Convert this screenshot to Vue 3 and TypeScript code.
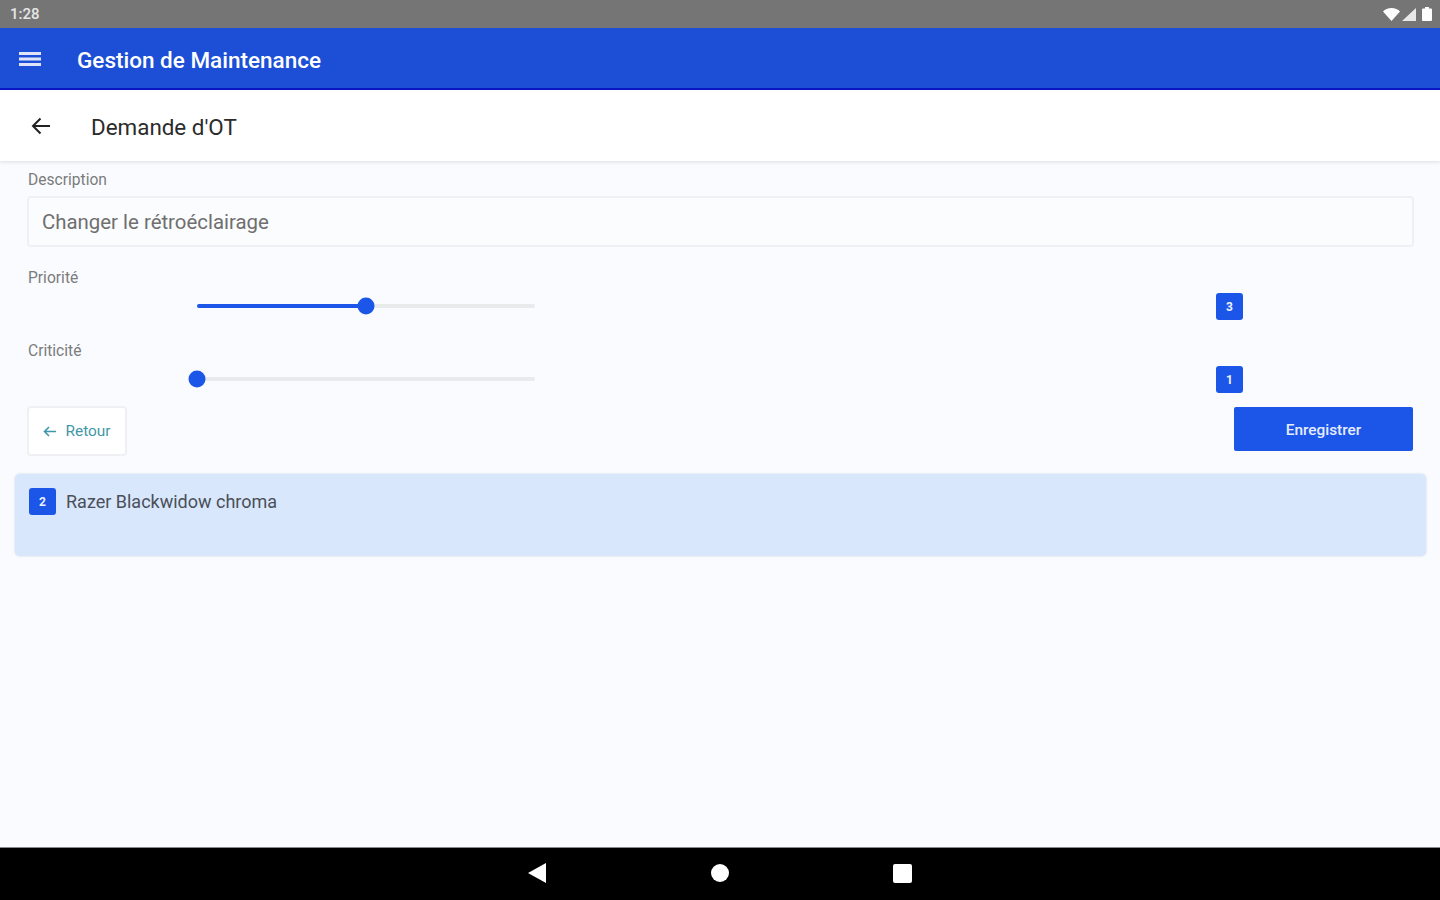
<script setup lang="ts">
interface SliderRow { label: string; value: number; percent: number }
const sliders: SliderRow[] = [
  { label: 'Priorité', value: 3, percent: 50 },
  { label: 'Criticité', value: 1, percent: 0 },
]
</script>

<template>
  <div class="page">
    <div class="status">
      <span class="time">1:28</span>
      <div class="status-icons">
        <svg width="17" height="13" viewBox="0 0 17 13"><path d="M0 3.500C2 1.300 5 0 8.500 0S15 1.300 17 3.500L8.500 13z" fill="#fff" /></svg>
        <svg width="14" height="13" viewBox="0 0 14 13"><path d="M14 0V13H0z" fill="#e8e8e8" /></svg>
        <svg class="battery" width="10" height="14" viewBox="0 0 10 14"><path d="M3 0h4v1.500h2a1 1 0 0 1 1 1V13a1 1 0 0 1-1 1H1a1 1 0 0 1-1-1V2.500a1 1 0 0 1 1-1h2z" fill="#fff" /></svg>
      </div>
    </div>

    <header class="appbar">
      <svg class="menu" width="22" height="16" viewBox="0 0 22 16"><path d="M0 1h22v3H0zM0 6.500h22v3H0zM0 12h22v3H0z" fill="#dfe4fa" /></svg>
      <h1>Gestion de Maintenance</h1>
    </header>

    <div class="subbar">
      <svg width="20" height="18" viewBox="0 0 20 18" fill="none" stroke="#222" stroke-width="2"><path d="M19 9H2M9.500 1.500L2 9l7.500 7.500" /></svg>
      <h2>Demande d'OT</h2>
    </div>

    <main class="content">
      <div class="form">
        <label class="label first">Description</label>
        <div class="input">Changer le rétroéclairage</div>

        <template v-for="s in sliders" :key="s.label">
          <label class="label">{{ s.label }}</label>
          <div class="slider-row">
            <div class="track">
              <div class="fill" :style="{ width: s.percent + '%' }"></div>
              <div class="thumb" :style="{ left: s.percent + '%' }"></div>
            </div>
            <span class="badge">{{ s.value }}</span>
          </div>
        </template>

        <div class="actions">
          <button class="back">
            <svg width="13" height="11" viewBox="0 0 13 11" fill="none" stroke="#3f97a8" stroke-width="1.600"><path d="M13 5.500H2M6 1L1.500 5.500 6 10" /></svg>
            Retour
          </button>
          <button class="save">Enregistrer</button>
        </div>
      </div>

      <div class="card">
        <span class="badge">2</span>
        <span class="card-text">Razer Blackwidow chroma</span>
      </div>
    </main>

    <footer class="nav">
      <svg width="18" height="20" viewBox="0 0 18 20"><path d="M18 0V20L0 10z" fill="#fff" /></svg>
      <span class="dot"></span>
      <span class="square"></span>
    </footer>
  </div>
</template>

<style>
html, body { margin: 0; padding: 0; }
</style>

<style scoped>
.page {
  width: 1440px;
  height: 900px;
  display: flex;
  flex-direction: column;
  overflow: hidden;
  background: #f9fbfe;
  font-family: Roboto, "Liberation Sans", sans-serif;
}
.status {
  height: 28px;
  flex: none;
  background: #757575;
  display: flex;
  align-items: center;
  justify-content: space-between;
  padding: 0 8px 0 10px;
  box-sizing: border-box;
}
.time { color: #e6e6e6; font-size: 15px; font-weight: 500; }
.status-icons { display: flex; align-items: center; gap: 2px; }
.battery { margin-left: 4px; }
.appbar {
  height: 62px;
  flex: none;
  box-sizing: border-box;
  background: #1c4fd6;
  border-bottom: 2px solid #0a18c8;
  display: flex;
  align-items: center;
  padding-left: 19px;
}
.appbar h1 {
  margin: 4px 0 0 36px;
  color: #fff;
  font-size: 22.5px;
  font-weight: 500;
}
.menu { margin-top: 1px; }
.subbar {
  height: 71px;
  flex: none;
  box-sizing: border-box;
  background: #fff;
  display: flex;
  align-items: center;
  padding-left: 31px;
  box-shadow: 0 1px 4px rgba(0, 0, 0, 0.12);
  position: relative;
}
.subbar h2 {
  margin: 2px 0 0 40px;
  font-size: 22.4px;
  font-weight: 400;
  color: #2b2b2b;
}
.content { flex: 1; min-height: 0; }
.form { padding: 0 26px 0 27px; }
.label {
  display: block;
  height: 18px;
  line-height: 18px;
  margin-top: 22px;
  padding-left: 1px;
  font-size: 15.6px;
  color: #7c7c7c;
}
.label.first { margin-top: 10px; }
.input {
  margin-top: 7px;
  height: 51px;
  box-sizing: border-box;
  border: 2px solid #eef0f3;
  border-radius: 4px;
  background: #fbfcfe;
  padding-left: 13px;
  display: flex;
  align-items: center;
  font-size: 20.4px;
  color: #6f6f6f;
}
.slider-row {
  margin-top: 6px;
  height: 27px;
  display: flex;
  align-items: center;
  padding-left: 170px;
}
.track {
  position: relative;
  width: 338px;
  height: 4px;
  margin-bottom: 1px;
  border-radius: 2px;
  background: #e8eaeb;
}
.fill {
  position: absolute;
  left: 0;
  top: 0;
  bottom: 0;
  background: #1c56e8;
  border-radius: 2px;
}
.thumb {
  position: absolute;
  top: 50%;
  width: 17px;
  height: 17px;
  border-radius: 50%;
  background: #1c56e8;
  transform: translate(-50%, -50%);
}
.badge {
  width: 27px;
  height: 27px;
  flex: none;
  border-radius: 3px;
  background: #1c56e8;
  color: #eef2ff;
  font-size: 12px;
  font-weight: 700;
  display: flex;
  align-items: center;
  justify-content: center;
}
.slider-row .badge { margin-left: 681px; }
.actions {
  margin-top: 13px;
  height: 49px;
  display: flex;
  justify-content: space-between;
  align-items: flex-start;
}
.back {
  width: 100px;
  height: 50px;
  box-sizing: border-box;
  border: 2px solid #eef0f3;
  border-radius: 4px;
  background: #fff;
  color: #3f97a8;
  font: 400 15.400px Roboto, "Liberation Sans", sans-serif;
  display: flex;
  align-items: center;
  justify-content: center;
  gap: 9px;
  padding: 0;
}
.save {
  width: 179px;
  height: 44px;
  margin: 1px 1px 0 0;
  border: none;
  border-radius: 2px;
  background: #1c56e8;
  color: #e6ecff;
  font: 500 15.400px Roboto, "Liberation Sans", sans-serif;
  padding: 2px 0 0;
}
.card {
  margin: 19px 14px 0 15px;
  height: 82px;
  box-sizing: border-box;
  padding: 14px;
  border-radius: 5px;
  background: #d9e7fc;
  box-shadow: 0 0 2px rgba(60, 90, 140, 0.25);
  display: flex;
  align-items: flex-start;
  gap: 10px;
}
.card-text {
  font-size: 18px;
  line-height: 28px;
  color: #4a4f58;
}
.nav {
  height: 53px;
  flex: none;
  background: #000;
  display: flex;
  align-items: center;
  justify-content: center;
  gap: 165px;
  border-top: 1px solid #8a8a8a;
  box-sizing: border-box;
  padding-bottom: 2px;
}
.dot {
  width: 18px;
  height: 18px;
  border-radius: 50%;
  background: #fff;
}
.square {
  width: 19px;
  height: 19px;
  margin-left: -1px;
  border-radius: 2px;
  background: #fff;
}
</style>
